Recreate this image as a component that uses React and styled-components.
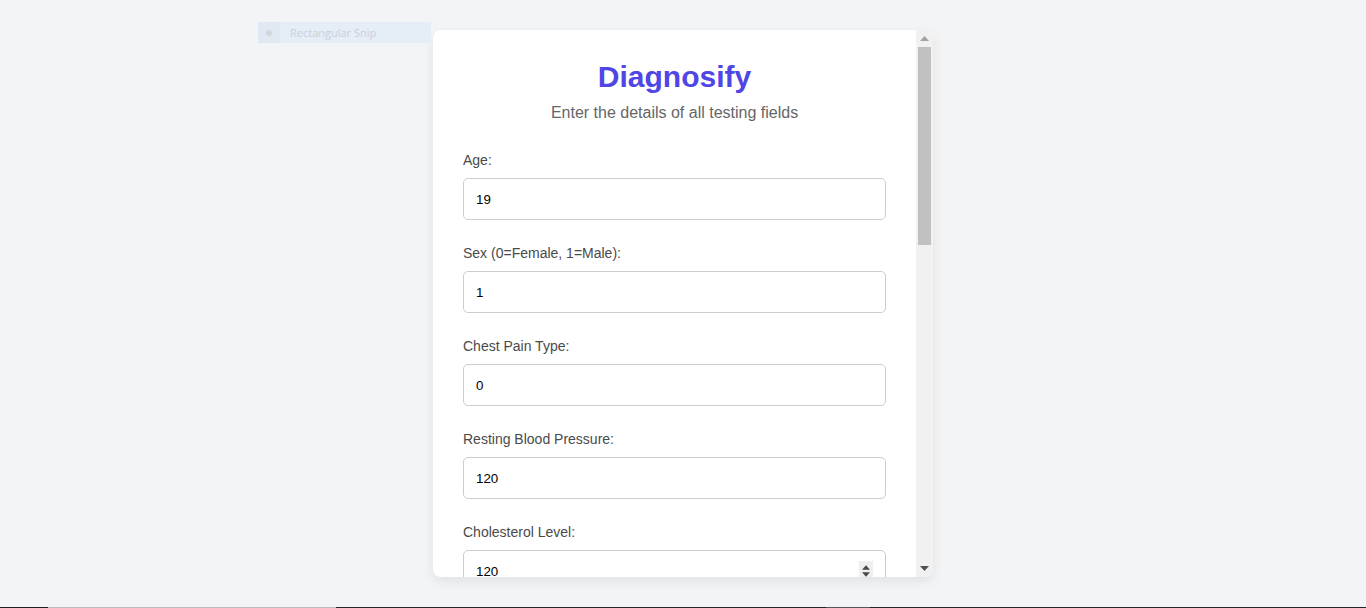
import React, { useEffect, useRef } from 'react';
import styled, { createGlobalStyle } from 'styled-components';

const GlobalStyle = createGlobalStyle`
  html, body {
    margin: 0;
    padding: 0;
    background: #f3f4f6;
    font-family: "Liberation Sans", Arial, sans-serif;
  }
`;

const Page = styled.div`
  height: 608px;
  display: flex;
  flex-direction: column;
  overflow: hidden;
`;

const Stage = styled.div`
  position: relative;
  flex: 1;
  display: flex;
  align-items: center;
  justify-content: center;
`;

const Card = styled.div`
  width: 500px;
  height: 547px;
  display: flex;
  background: #ffffff;
  border-radius: 8px;
  box-shadow: 0 4px 12px rgba(0, 0, 0, 0.08);
  overflow: hidden;
`;

const ScrollArea = styled.div`
  flex: 1;
  min-width: 0;
  overflow: hidden;
`;

const ScrollBar = styled.div`
  width: 17px;
  display: flex;
  flex-direction: column;
  background: #f1f1f1;
`;

const ScrollButton = styled.div`
  height: 17px;
  display: flex;
  align-items: center;
  justify-content: center;
`;

const ScrollTrack = styled.div`
  flex: 1;
  padding: 0 2px;
`;

const ScrollThumb = styled.div`
  height: 198px;
  background: #c1c1c1;
`;

const Form = styled.form`
  padding: 29px 30px 30px;
`;

const Title = styled.h1`
  margin: 0 0 6px;
  font-size: 30px;
  line-height: 36px;
  font-weight: 700;
  text-align: center;
  color: #4f46e5;
`;

const Subtitle = styled.p`
  margin: 0 0 25px;
  font-size: 16px;
  line-height: 24px;
  text-align: center;
  color: #666666;
`;

const FieldGroup = styled.div`
  margin-bottom: 23px;
`;

const Label = styled.label`
  display: block;
  margin-bottom: 8px;
  font-size: 14px;
  line-height: 20px;
  color: #4a4a4a;
`;

const InputWrap = styled.div`
  position: relative;
`;

const Input = styled.input`
  display: block;
  width: 100%;
  height: 42px;
  box-sizing: border-box;
  padding: 0 12px;
  border: 1px solid #cccccc;
  border-radius: 5px;
  font-family: "Liberation Sans", Arial, sans-serif;
  font-size: 13.33px;
  color: #000000;
  background: #ffffff;

  &:focus {
    outline: none;
  }

  &::-webkit-inner-spin-button,
  &::-webkit-outer-spin-button {
    -webkit-appearance: none;
    margin: 0;
  }
`;

const Spinner = styled.div`
  position: absolute;
  right: 13px;
  top: 11px;
  width: 14px;
  height: 20px;
  display: flex;
  flex-direction: column;
  align-items: center;
  justify-content: center;
  gap: 2px;
  background: #efefef;
`;

const SubmitButton = styled.button`
  display: block;
  width: 100%;
  height: 44px;
  border: none;
  border-radius: 5px;
  background: #4f46e5;
  color: #ffffff;
  font-family: "Liberation Sans", Arial, sans-serif;
  font-size: 16px;
  font-weight: 700;
`;

const SnipTip = styled.div`
  position: absolute;
  left: 258px;
  top: 22px;
  width: 173px;
  height: 21px;
  display: flex;
  align-items: center;
  background: #e4edf6;
  opacity: 0.9;
`;

const SnipIcon = styled.div`
  width: 22px;
  height: 21px;
  display: flex;
  align-items: center;
  justify-content: center;
  background: #dfe8f2;

  &::before {
    content: '';
    width: 6px;
    height: 6px;
    border-radius: 50%;
    background: #ccd3da;
  }
`;

const SnipText = styled.span`
  margin-left: 10px;
  font-family: "Open Sans", "Noto Sans", sans-serif;
  font-size: 11px;
  color: #c6ccd3;
`;

const Taskbar = styled.div`
  height: 1px;
  display: flex;
`;

const TaskSegment = styled.div`
  height: 1px;
  background: ${(p) => p.$color};
`;

const Arrow = ({ down, color, w = 9, h = 5 }) => (
  <svg width={w} height={h} viewBox="0 0 9 5">
    <path d={down ? 'M0 0 L9 0 L4.5 5 Z' : 'M0 5 L9 5 L4.5 0 Z'} fill={color} />
  </svg>
);

const fields = [
  { label: 'Age:', value: '19' },
  { label: 'Sex (0=Female, 1=Male):', value: '1' },
  { label: 'Chest Pain Type:', value: '0' },
  { label: 'Resting Blood Pressure:', value: '120' },
  { label: 'Cholesterol Level:', value: '120', active: true },
  { label: 'Fasting Blood Sugar (1=True, 0=False):', value: '' },
  { label: 'Resting ECG Results:', value: '' },
  { label: 'Maximum Heart Rate Achieved:', value: '' },
  { label: 'Exercise Induced Angina (1=Yes, 0=No):', value: '' },
  { label: 'ST Depression (Oldpeak):', value: '' },
  { label: 'Slope of Peak Exercise ST Segment:', value: '' },
  { label: 'Number of Major Vessels:', value: '' },
  { label: 'Thalassemia:', value: '' },
];

const segments = [
  { w: 48, c: '#202020' },
  { w: 288, c: '#bdbdbd' },
  { w: 490, c: '#252525' },
  { w: 44, c: '#555555' },
  { w: 496, c: '#252525' },
];

const App = () => {
  const activeRef = useRef(null);

  useEffect(() => {
    if (activeRef.current) activeRef.current.focus({ preventScroll: true });
  }, []);

  return (
    <Page>
      <GlobalStyle />
      <Stage>
        <SnipTip>
          <SnipIcon />
          <SnipText>Rectangular Snip</SnipText>
        </SnipTip>
        <Card>
          <ScrollArea>
            <Form onSubmit={(e) => e.preventDefault()}>
              <Title>Diagnosify</Title>
              <Subtitle>Enter the details of all testing fields</Subtitle>
              {fields.map((f) => (
                <FieldGroup key={f.label}>
                  <Label>{f.label}</Label>
                  <InputWrap>
                    <Input
                      type="number"
                      defaultValue={f.value}
                      ref={f.active ? activeRef : undefined}
                    />
                    {f.active && (
                      <Spinner>
                        <Arrow color="#4a4a4a" w={8} h={5} />
                        <Arrow down color="#4a4a4a" w={8} h={5} />
                      </Spinner>
                    )}
                  </InputWrap>
                </FieldGroup>
              ))}
              <SubmitButton type="submit">Predict</SubmitButton>
            </Form>
          </ScrollArea>
          <ScrollBar>
            <ScrollButton>
              <Arrow color="#a3a3a3" />
            </ScrollButton>
            <ScrollTrack>
              <ScrollThumb />
            </ScrollTrack>
            <ScrollButton>
              <Arrow down color="#505050" />
            </ScrollButton>
          </ScrollBar>
        </Card>
      </Stage>
      <Taskbar>
        {segments.map((s, i) => (
          <TaskSegment key={i} $color={s.c} style={{ width: s.w }} />
        ))}
      </Taskbar>
    </Page>
  );
};

export default App;
